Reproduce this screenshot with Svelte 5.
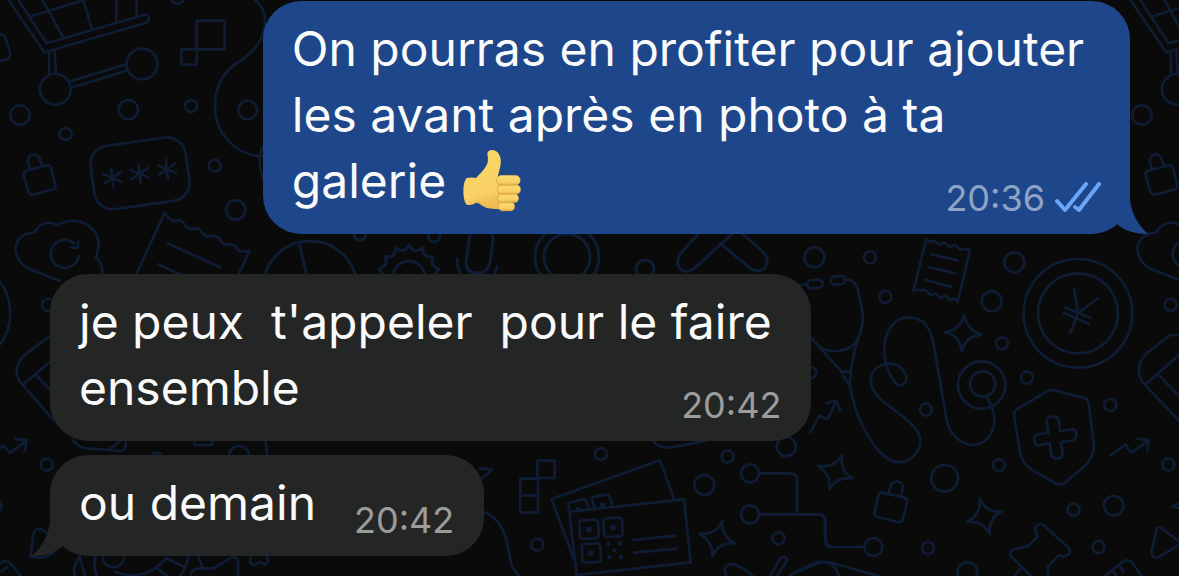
<script>
  const messages = [
    { text: 'On pourras en profiter pour ajouter\nles avant après en photo à ta\ngalerie ', thumb: true, time: '20:36', own: true, tail: true, size: 'wide' },
    { text: "je peux  t'appeler  pour le faire\nensemble", time: '20:42', own: false, tail: false, size: 'medium' },
    { text: 'ou demain', time: '20:42', own: false, tail: true, size: 'fit' }
  ];

  const stars = [[337, 534], [419, 521], [501, 508]];
  const gear = Array.from({ length: 14 }, (_, i) => {
    const a = (i * Math.PI) / 7;
    const b = a + Math.PI / 14;
    const c = a + Math.PI / 7;
    const p = (r, t) => `${(409 + r * Math.cos(t)).toFixed(1)} ${(276 + r * Math.sin(t)).toFixed(1)}`;
    return `${i ? '' : 'M' + p(26, a)} Q${p(27, b - 0.08)} ${p(31, b)} Q${p(27, b + 0.08)} ${p(26, c)}`;
  }).join(' ');
</script>

<main class="chat">
  <svg class="wallpaper" viewBox="0 0 1179 576" preserveAspectRatio="xMinYMin slice" aria-hidden="true">
    <defs>
      <g id="doodles">
        <path d="M22-5 133 157 435 70Q450 65 446 52 442 40 428 46L140 130 52-5M88 50 265-4M125-5 188 110M250 0 276 88M349-5V64M410-5V46" />
        <circle cx="166" cy="268" r="46" /><circle cx="426" cy="192" r="46" />
        <path d="M147 155V224M163 150 168 222M207 245 380 192M213 263 384 211" />
        <path d="M80 512 142 496Q150 495 153 503L166 555Q168 565 160 568L100 584Q90 586 86 578L71 525Q69 515 80 512ZM90 508 84 484C82 460 115 455 120 480L126 498" />
        <circle cx="60" cy="345" r="29" />
        <path d="M180 843 90 808C30 780 30 700 105 697 115 670 150 660 172 676 230 640 300 680 296 740L288 772Q308 785 308 830M236 768A42 42 0 1 1 222 730M236 725 232 744 212 742" />
      </g>
    </defs>
    <g class="trace" transform="scale(.3333)">
      <use href="#doodles" />
      <use href="#doodles" x="3366" />
      <path d="M-5 103Q12 100 18 118L29 155Q34 172 20 178L-5 185" />
      <circle cx="385" cy="329" r="29" /><circle cx="197" cy="402" r="18" /><circle cx="573" cy="318" r="18" />
      <circle cx="743" cy="330" r="28" /><circle cx="644" cy="497" r="18" /><circle cx="707" cy="630" r="29" /><circle cx="532" cy="-6" r="18" />
      <rect x="590" y="62" width="84" height="86" /><rect x="544" y="148" width="46" height="46" />
      <path d="M760-5C820 40 800 130 725 180 670 210 645 260 645 320 645 400 710 470 790 468M790 440Q768 470 790 540" />
      <rect x="276" y="424" width="288" height="192" rx="56" transform="rotate(-8 420 520)" />
      {#each stars as [x, y]}
        <path transform="translate({x} {y}) rotate(-6)" d="M0-29V29M-26-14 26 14M-26 14 26-14" />
      {/each}
      <path d="M408 825 494 638Q510 665 525 662 545 655 555 675 565 690 582 686 600 682 608 700 618 714 634 708 655 706 662 722 672 738 690 733 708 735 712 748 722 758 749 753L715 825M503 730 660 802M474 793 545 825" />
    </g>
    <g class="trace" transform="translate(800 220) scale(.3333)">
      <circle cx="43" cy="112" r="30" /><circle cx="210" cy="112" r="18" /><circle cx="256" cy="231" r="18" /><circle cx="643" cy="127" r="30" />
      <circle cx="575" cy="244" r="30" /><circle cx="606" cy="370" r="18" /><circle cx="681" cy="473" r="18" /><circle cx="378" cy="569" r="18" />
      <circle cx="597" cy="736" r="18" /><circle cx="434" cy="775" r="40" /><circle cx="931" cy="555" r="18" /><circle cx="1112" cy="255" r="18" />
      <circle cx="1105" cy="734" r="18" /><circle cx="821" cy="869" r="18" /><circle cx="941" cy="857" r="29" /><circle cx="896" cy="981" r="18" />
      <circle cx="384" cy="984" r="18" /><circle cx="502" cy="1057" r="30" /><circle cx="32" cy="458" r="17" />
      <path d="M379 56Q386 70 396 62 405 60 410 70 420 78 428 68 438 66 443 76 452 84 460 75 470 74 474 84 482 92 490 86L510 90 473 246Q466 232 456 238 448 244 443 233 436 224 427 232 418 236 413 226 407 216 398 224 388 228 384 217 376 206 366 212 352 206 340 214ZM396 103 473 121M386 141 464 160M377 180 453 200" />
      <rect x="22" y="180" width="46" height="24" rx="12" transform="rotate(-6 45 192)" />
      <rect x="92" y="169" width="44" height="24" rx="12" transform="rotate(-6 114 181)" />
      <path d="M-5 200Q10 190 24 194M136 178Q168 178 175 215L188 280C192 320 180 335 175 355C150 400 90 402 55 378M30 350 120 450 150 500C165 570 180 620 230 685C275 740 325 740 355 690C375 650 345 620 315 595L245 540C190 490 210 435 270 430C310 435 325 470 317 485C300 520 260 470 253 400C250 330 285 290 330 292C380 295 395 335 403 385L440 600C450 650 490 675 520 675C570 672 592 620 580 575L560 530M175 355Q150 430 150 495M125 455H148" />
      <circle cx="545" cy="495" r="71" /><circle cx="548" cy="492" r="38" />
      <path d="M493 285Q500 330 545 344 494 350 486 395 480 345 434 337 480 332 493 285Z" />
      <path d="M126 705Q120 755 158 775 108 770 88 808 94 765 54 738 105 745 126 705Z" />
      <path d="M539 836Q560 882 607 873 563 895 570 942 548 900 501 906 544 885 539 836Z" />
      <circle cx="834" cy="280" r="163" /><circle cx="834" cy="280" r="120" />
      <path d="M822 206 834 280 892 235M834 280 811 339M797 263 871 294M792 279 866 311" />
      <path d="M745 512Q755 508 765 512L850 533Q865 537 867 555L881 670C884 700 870 725 850 742L793 790Q783 796 770 792L700 752Q664 730 660 695L642 585Q641 573 655 565Z" />
      <path d="M740 606Q740 591 755 590 775 588 777 602L780 634 813 628Q829 627 829 643 829 660 814 662L782 667 788 697Q789 713 774 715 757 717 754 702L749 669 718 676Q704 677 703 660 701 644 717 642L745 638Z" />
      <path d="M930 707 977 674 994 698 1047 661M1013 656 1047 661 1042 692M32 637 57 587 84 598 109 542M79 550 109 542 121 572" />
      <path d="M245 817 312 833Q324 837 321 849L308 899Q304 909 293 906L232 891Q221 887 224 876L236 825Q238 817 245 817ZM266 820 272 798C282 775 314 785 308 806L302 829" />
      <path d="M-8 883H55Q77 883 77 905V958Q77 981 100 981H192" /><circle cx="220" cy="981" r="27" />
      <path d="M1137 345H1110L1040 400C1010 430 1010 465 1035 495L1160 625M1035 495 1137 405M1073 462 1155 545" />
      <path d="M705 925Q715 905 732 916L807 985Q817 1008 785 1010 778 1001 770 1012L743 1041 746 1075M705 925Q705 940 714 949L685 977 642 988Q623 996 635 1011L700 1075M661 1046 640 1072" />
      <path d="M1070 926Q1078 918 1088 927L1145 970 1075 1012Q1055 1018 1055 995ZM910 1072 965 1028Q985 1014 998 1030L1030 1075M960 1040 970 1054M940 1055 950 1068M1140 848 1117 860 1140 864" />
      <path d="M-5 1055 55 1030Q75 1022 100 1030L250 1072M90 1027Q110 1045 117 1070" />
    </g>
    <g class="trace" transform="translate(480 430) scale(.3333)">
      <circle cx="363" cy="72" r="18" /><circle cx="172" cy="344" r="18" /><circle cx="743" cy="80" r="18" /><circle cx="673" cy="165" r="30" />
      <circle cx="919" cy="50" r="29" /><circle cx="810" cy="130" r="27" /><circle cx="810" cy="253" r="27" /><circle cx="896" cy="325" r="18" />
      <rect x="172" y="92" width="52" height="52" /><path d="M172 146H121V247H174V146M121 197H174" />
      <path d="M280 385 215 207 540 91 582 207M268 245 612 208 632 397 290 435Z" />
      <path d="M268 241 266 227Q264 218 275 216L310 208Q320 207 325 232M343 231 336 210Q335 202 344 200L378 194Q390 192 395 222" />
      <rect x="299" y="270" width="56" height="56" rx="9" transform="rotate(-3 327 298)" />
      <rect x="371" y="264" width="56" height="56" rx="9" transform="rotate(-3 399 292)" />
      <rect x="306" y="341" width="56" height="56" rx="9" transform="rotate(-3 334 369)" />
      <path class="solid" d="M319 290h16v16h-16zM391 284h16v16h-16zM325 362h16v16h-16zM288 232h14v10h-14zM360 218h16v14h-16zM379 337h12v12h-12zM414 334h12v12h-12zM397 355h12v12h-12zM382 376h12v12h-12zM417 375h12v12h-12z" />
      <path d="M461 330 584 317M463 368 588 356" />
      <path d="M727 272Q722 320 765 340 715 335 697 380 700 335 658 311 710 315 727 272Z" />
      <path d="M838 130H930Q951 130 951 150V253M838 253H1015Q1035 253 1035 275V330Q1035 350 1055 352" />
      <path d="M12 245Q60 265 78 325L96 410 118 440M518 32Q540 60 585 50L680 32M0 115 36 119-5 155" />
      <path d="M740 440Q725 405 755 402 790 410 820 440M870 440 900 385Q915 374 922 390L890 440M930 435 1000 400Q1030 388 1060 405" />
    </g>
    <g class="trace" transform="translate(0 230) scale(.3333)">
      <path d="M-5 150C40 200 45 290-5 350M150 318 80 370C45 400 40 435 68 465L160 570M68 465 150 395M108 435 155 485" />
      <circle cx="144" cy="225" r="18" /><circle cx="140" cy="704" r="18" /><circle cx="-16" cy="827" r="20" /><circle cx="717" cy="678" r="30" /><circle cx="470" cy="688" r="20" />
      <path d="M-5 655 12 648 29 669 80 631M47 627 80 631 75 663M218 630Q235 652 260 655L360 663Q376 662 377 648V630M330 658 360 632M583 630V645H637V630M797 630 802 675" />
      <path d="M92 980 100 912Q106 890 125 898L150 915M95 980Q130 990 160 968M0 1000 Q22 985 35 1005L62 1038M5 1025 20 1012" />
      <path d="M240 978Q210 1020 230 1045M240 985 258 1045M288 975Q275 1010 295 1045M310 975C300 1022 375 1025 373 975M345 1025Q430 1060 500 985M500 985 550 1010M470 1015 505 1040M565 975Q560 1015 535 1045M595 978 608 1015H640L690 985Q715 975 714 1000V1040M608 1015Q570 1015 572 1040M755 978Q740 1000 765 1005 785 990 795 1005 810 995 800 978" />
    </g>
    <g class="trace fine">
      <circle cx="310" cy="288" r="47" /><path d="M299 243 307 276" />
      <circle cx="360" cy="234" r="6" /><circle cx="434" cy="236" r="6" />
      <circle cx="409" cy="277" r="16" /><path d={gear} />
      <path d="M470 233 466 262Q466 273 478 273 488 273 490 262L493 240Q493 236 491 233M457 259Q457 270 462 276M497 267 494 276" />
      <circle cx="567" cy="257" r="32" /><circle cx="567" cy="257" r="23" /><circle cx="645" cy="269" r="9" />
      <path d="M699 233 680 254Q674 265 683 271 690 273 697 266L732 234M720 243 750 268Q758 274 765 268 770 261 764 253L743 234" />
    </g>
  </svg>

  {#each messages as m}
    <article class="bubble {m.size}" class:own={m.own}>
      {#if m.tail}
        <svg class="tail" viewBox="0 0 44 44" aria-hidden="true">
          <path d="M24 0C25 21 31 33 43 44 31 44 20 41 13 35L0 20V0Z" />
        </svg>
      {/if}
      <p>{m.text}{#if m.thumb}<svg class="thumb" viewBox="66 54 180 189" role="img" aria-label="👍">
            <defs>
              <linearGradient id="skin" x1="0" y1="0" x2="0.2" y2="1">
                <stop offset="0" stop-color="#fbd566" /><stop offset=".8" stop-color="#f9d167" /><stop offset="1" stop-color="#f0b954" />
              </linearGradient>
              <linearGradient id="finger" x1="0" y1="0" x2="0" y2="1">
                <stop offset="0" stop-color="#fddb72" /><stop offset=".7" stop-color="#f8cf65" /><stop offset="1" stop-color="#e2aa48" />
              </linearGradient>
            </defs>
            <path fill="url(#skin)" d="M79 142Q93 137 108 141C119 130 131 118 138 106 145 94 145 82 142 69 142 55 161 53 172 63 183 75 184 91 181 106L174 134 190 235Q163 235 145 232C128 228 120 215 108 215Q94 225 80 221C68 208 66 158 79 142Z" />
            <path fill="none" stroke="#d69a3a" stroke-width="2" opacity=".65" d="M113 205Q116 218 128 226M173 140Q165 150 174 163M174 163Q170 178 176 190M176 190Q170 202 177 213M177 213Q175 225 181 234" />
            <g fill="url(#finger)" stroke="#cf9139" stroke-width="1.2">
              <rect x="175" y="212" width="49" height="28" rx="13" />
              <rect x="173" y="188" width="63" height="27" rx="13" />
              <rect x="172" y="161" width="70" height="29" rx="14" />
              <rect x="170" y="133" width="71" height="30" rx="15" />
            </g>
          </svg>{/if}<span class="meta"><time>{m.time}</time>{#if m.own}<svg class="ticks" viewBox="0 0 48 32" role="img" aria-label="Lu"><path d="M3 19 11 28 32 2M21 25 25 28 45 2" /></svg>{/if}</span></p>
    </article>
  {/each}
</main>

<style>
  :global(body) {
    margin: 0;
    background: #0a0a0a;
  }
  .chat {
    position: relative;
    isolation: isolate;
    box-sizing: border-box;
    min-height: 100vh;
    overflow: hidden;
    padding: 1px 49px 20px 50px;
    display: flex;
    flex-direction: column;
    align-items: flex-start;
    gap: 14px;
    font-family: Inter, "Liberation Sans", sans-serif;
    color: #fafafa;
  }
  .wallpaper {
    position: absolute;
    inset: 0;
    width: 100%;
    height: 100%;
    z-index: -1;
  }
  .trace {
    fill: none;
    stroke: #0e1d34;
    stroke-width: 8;
    stroke-linecap: round;
    stroke-linejoin: round;
  }
  .fine {
    stroke-width: 3;
  }
  .solid {
    fill: #0e1d34;
    stroke: none;
  }
  .bubble {
    --fill: #242625;
    position: relative;
    box-sizing: border-box;
    padding: 15px 30px 20px 29px;
    border-radius: 38px;
    background: var(--fill);
  }
  .own {
    --fill: #1d478a;
    align-self: flex-end;
    margin-bottom: 26px;
    padding-right: 28px;
  }
  .wide {
    width: 80.3%;
  }
  .medium {
    width: 70.5%;
  }
  p {
    margin: 0;
    font-size: 48px;
    line-height: 66px;
    white-space: pre-wrap;
  }
  p::after {
    content: "";
    display: block;
    clear: both;
  }
  .meta {
    float: right;
    display: flex;
    align-items: center;
    gap: 9px;
    height: 32px;
    margin: 34px 0 0 38px;
    font-size: 36px;
    line-height: 32px;
    color: #9b9c9b;
  }
  .own .meta {
    color: #8ea3c5;
  }
  .ticks {
    width: 48px;
    height: 32px;
    fill: none;
    stroke: #6ba5f7;
    stroke-width: 4;
    stroke-linecap: round;
    stroke-linejoin: round;
  }
  .thumb {
    width: 60px;
    height: 63px;
    margin-left: 2px;
    vertical-align: -14px;
  }
  .tail {
    position: absolute;
    bottom: 0;
    left: -19px;
    width: 44px;
    height: 44px;
    fill: var(--fill);
    transform: scaleX(-1);
  }
  .own .tail {
    left: auto;
    right: -19px;
    transform: none;
  }
</style>
